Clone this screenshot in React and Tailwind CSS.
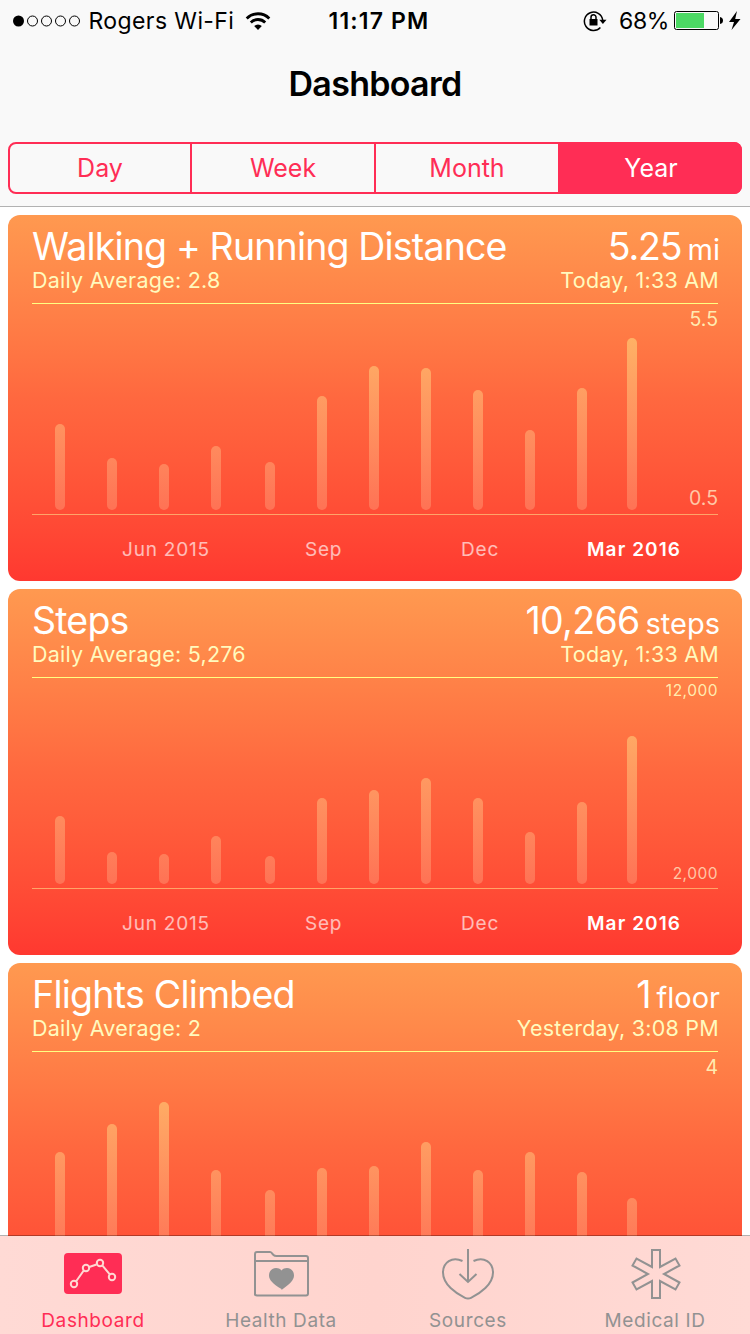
import React from 'react'

const BAR_X = [55, 107, 159, 211, 265, 317, 369, 421, 473, 525, 577, 627]

const SEGMENTS = [
  { label: 'Day', width: 'w-[182px]' },
  { label: 'Week', width: 'w-[184px]' },
  { label: 'Month', width: 'w-[184px]' },
]

const CARDS = [
  {
    id: 'distance',
    title: 'Walking + Running Distance',
    titleClass: 'tracking-[-0.83px]',
    average: '2.8',
    value: '5.25',
    unit: 'mi',
    valueClass: 'tracking-[-1.1px]',
    time: 'Today, 1:33 AM',
    max: '5.5',
    min: '0.5',
    scaleClass: 'text-[19.5px] pt-[3px] pb-[4px]',
    bars: [86, 52, 46, 64, 48, 114, 144, 142, 120, 80, 122, 172],
    showMonths: true,
  },
  {
    id: 'steps',
    title: 'Steps',
    titleClass: 'tracking-[-0.8px]',
    average: '5,276',
    value: '10,266',
    unit: 'steps',
    valueClass: 'tracking-[-0.7px]',
    time: 'Today, 1:33 AM',
    max: '12,000',
    min: '2,000',
    scaleClass: 'text-[15.5px] tracking-[0.5px] pt-[1px] pb-[2px]',
    bars: [68, 32, 30, 48, 28, 86, 94, 106, 86, 52, 82, 148],
    showMonths: true,
  },
  {
    id: 'flights',
    title: 'Flights Climbed',
    titleClass: 'tracking-[-0.74px]',
    average: '2',
    value: '1',
    unit: 'floor',
    valueClass: 'tracking-[-1px]',
    time: 'Yesterday, 3:08 PM',
    max: '4',
    scaleClass: 'text-[19.5px] pt-[3px] pb-[4px]',
    bars: [106, 134, 156, 88, 68, 90, 92, 116, 88, 106, 86, 60],
  },
]

function StatusBar() {
  return (
    <div className="flex h-10 items-center justify-between pl-3 pr-[9px] pt-[1px] text-[23px] text-black">
      <div className="flex w-[300px] items-center">
        <svg width="70" height="14" viewBox="0 0 70 14" fill="none" stroke="black">
          <circle cx="6.5" cy="7" r="5.5" fill="black" stroke="none" />
          <circle cx="20.5" cy="7" r="5" />
          <circle cx="34.5" cy="7" r="5" />
          <circle cx="48.5" cy="7" r="5" />
          <circle cx="62.5" cy="7" r="5" />
        </svg>
        <span className="ml-[6.5px] whitespace-nowrap pt-[1px] tracking-[0.4px]">Rogers Wi-Fi</span>
        <svg className="ml-[11px]" width="26" height="20" viewBox="0 0 26 20" fill="none" stroke="black" strokeWidth="2.8">
          <path d="M1.7 7.4a16 16 0 0 1 22.6 0" />
          <path d="M5.8 11.5a10.2 10.2 0 0 1 14.4 0" />
          <path d="M9.2 15.1a5.4 5.4 0 0 1 7.6 0L13 19z" fill="black" stroke="none" />
        </svg>
      </div>
      <span className="whitespace-nowrap pl-[5px] pt-[1px] font-semibold tracking-[1.15px]">11:17 PM</span>
      <div className="flex w-[300px] items-center justify-end">
        <svg width="24" height="22" viewBox="0 0 24 22" fill="none" stroke="black" strokeWidth="1.5">
          <path d="M17.4 17.5A9.2 9.2 0 1 1 19.7 10" />
          <path d="M16.3 9.8h7.2L19.9 14z" fill="black" stroke="none" />
          <rect x="6.5" y="9" width="8" height="6.5" fill="black" stroke="none" />
          <path d="M8 9.5V7.3a2.5 2.5 0 0 1 5 0v2.2" />
        </svg>
        <span className="ml-3 pt-[1px] tracking-[-0.4px]">68%</span>
        <svg className="ml-[5px]" width="50" height="20" viewBox="0 0 50 20">
          <rect x="0.5" y="0.5" width="44" height="18" rx="2" fill="none" stroke="black" />
          <rect x="2" y="2" width="28" height="15" fill="#4cd964" />
          <path d="M46 6q3 .5 3 3.500t-3 3.500z" fill="black" />
        </svg>
        <svg className="ml-[5px]" width="12" height="20" viewBox="0 0 12 20">
          <path d="M8 0 0 11h5L2.500 19 11.500 8H6.200z" fill="black" />
        </svg>
      </div>
    </div>
  )
}

function Chart({ card }) {
  return (
    <div className="flex h-[212px] justify-between border-y border-t-[#ffff82] border-b-[#ffe08a]/60">
      <svg width="620" height="210" viewBox="32 0 620 210">
        <defs>
          <linearGradient id={`bar-${card.id}`} gradientUnits="userSpaceOnUse" x1="0" y1="30" x2="0" y2="206">
            <stop offset="0" stopColor="#ffe682" stopOpacity="0.52" />
            <stop offset="1" stopColor="#ffcfa4" stopOpacity="0.28" />
          </linearGradient>
        </defs>
        {card.bars.map((height, i) => (
          <rect
            key={BAR_X[i]}
            x={BAR_X[i]}
            y={206 - height}
            width="10"
            height={height}
            rx="5"
            fill={`url(#bar-${card.id})`}
          />
        ))}
      </svg>
      <div className={`flex flex-col items-end justify-between leading-6 ${card.scaleClass}`}>
        <span className="text-[#fffabe]/90">{card.max}</span>
        {card.min && <span className="text-[#fff0cd]/75">{card.min}</span>}
      </div>
    </div>
  )
}

function HealthCard({ card }) {
  return (
    <section className="h-[366px] shrink-0 rounded-xl bg-linear-to-b from-[#ff9950] via-[#ff683f] to-[#ff3830] px-6">
      <div className="-mr-[2px] flex h-[54px] items-end justify-between whitespace-nowrap text-white">
        <h2 className={`text-[37.5px] leading-[44px] ${card.titleClass}`}>{card.title}</h2>
        <p className={`flex items-baseline gap-[6px] text-[37.5px] leading-[44px] ${card.valueClass}`}>
          {card.value}
          <span className="text-[29px] leading-none tracking-[0px]">{card.unit}</span>
        </p>
      </div>
      <div className="-mr-[1px] -mt-[2px] flex h-9 justify-between whitespace-nowrap text-[21.5px] leading-[26px] tracking-[0.25px] text-[#fffabe]">
        <span>Daily Average: {card.average}</span>
        <span>{card.time}</span>
      </div>
      <Chart card={card} />
      {card.showMonths && (
        <div className="flex h-[66px] items-center whitespace-nowrap pl-[90px] pt-[4px] text-[19px] tracking-[0.8px] text-white/65">
          <span className="w-[183px]">Jun 2015</span>
          <span className="w-[156px]">Sep</span>
          <span className="w-[126px]">Dec</span>
          <span className="font-semibold tracking-[1.1px] text-white">Mar 2016</span>
        </div>
      )}
    </section>
  )
}

function DashboardIcon() {
  return (
    <svg className="shrink-0" width="60" height="54" viewBox="0 0 60 54" fill="none">
      <rect x="1" y="6" width="58" height="41" rx="4" fill="#ff2d55" />
      <g stroke="#ffd8d2" strokeWidth="2">
        <path d="M13 34.500 20.800 23.500M25.500 20.200l8-2.700M39.500 18.700l7.300 8.700" />
        <circle cx="11" cy="37" r="3.200" />
        <circle cx="23" cy="21" r="3.200" />
        <circle cx="37" cy="16" r="3.200" />
        <circle cx="49" cy="30" r="3.200" />
      </g>
    </svg>
  )
}

function HealthDataIcon() {
  return (
    <svg className="shrink-0" width="60" height="54" viewBox="0 0 60 54" fill="none" stroke="#929292" strokeWidth="2">
      <path d="M4 48.500V7Q4 5 6 5h13q1.500 0 2.500 2l1 1q1 1 3 1H55q2 0 2 2v35.500q0 2-2 2H6q-2 0-2-2zM4 14h53" />
      <path d="M30.500 42C22 37 18 33 18 28.500c0-7.500 8.500-9.500 12.500-5 4-4.500 12.500-2.500 12.500 5 0 4.500-4 8.500-12.500 14.500z" fill="#929292" stroke="none" />
    </svg>
  )
}

function SourcesIcon() {
  return (
    <svg className="shrink-0" width="60" height="54" viewBox="0 0 60 54" fill="none" stroke="#929292" strokeWidth="2">
      <path d="M24.500 14C14 9 5 15.500 5 25.500c0 12 13 21 22 25.300q3 1.400 6 0C42 46.500 55 37.500 55 25.500 55 15.500 46 9 35.500 14" />
      <path d="M30 2v33M21.500 27l8.500 8 8.500-8" />
    </svg>
  )
}

function MedicalIcon() {
  return (
    <svg className="shrink-0" width="60" height="54" viewBox="-1 0 60 54" fill="none" stroke="#929292" strokeWidth="2">
      <path d="M26 3h8v17L49.500 11.500l4 7L38 27l15.500 8.500-4 7L34 34v17h-8V34l-15.500 8.500-4-7L22 27 6.500 18.500l4-7L26 20z" />
    </svg>
  )
}

const TABS = [
  { label: 'Dashboard', Icon: DashboardIcon, className: 'w-[186px] text-[#ff2d55]' },
  { label: 'Health Data', Icon: HealthDataIcon, className: 'w-[190px] text-[#929292]' },
  { label: 'Sources', Icon: SourcesIcon, className: 'w-[184px] text-[#929292]' },
  { label: 'Medical ID', Icon: MedicalIcon, className: 'w-[190px] text-[#929292]' },
]

export default function App() {
  return (
    <div className="flex h-[1334px] w-[750px] flex-col overflow-hidden bg-white font-['Inter','Liberation_Sans',sans-serif]">
      {/* Navigation header */}
      <header className="h-[207px] shrink-0 border-b border-[#b2b2b2] bg-[#f9f9f9]">
        <StatusBar />
        <h1 className="h-[102px] pt-[22px] text-center text-[34px] font-semibold leading-[44px] tracking-[-0.7px] text-black">
          Dashboard
        </h1>
        <div className="mx-2 flex h-[52px] rounded-lg border-2 border-[#ff2d55] text-[25px] text-[#ff2d55]">
          {SEGMENTS.map((segment) => (
            <button key={segment.label} className={`border-r-2 border-[#ff2d55] pt-[2px] ${segment.width}`}>
              {segment.label}
            </button>
          ))}
          <button className="-my-0.5 -mr-0.5 flex-1 rounded-r-lg bg-[#ff2d55] pt-[2px] text-white">Year</button>
        </div>
      </header>

      {/* Health cards */}
      <main className="flex h-[1029px] shrink-0 flex-col gap-2 overflow-hidden px-2 pt-2">
        {CARDS.map((card) => (
          <HealthCard key={card.id} card={card} />
        ))}
      </main>

      {/* Bottom tabs */}
      <nav className="-mt-px flex h-[99px] shrink-0 border-t border-black/30 bg-linear-to-r from-[#ffdad5] via-[#ffd4ce] to-[#ffdad5] bg-clip-padding">
        {TABS.map(({ label, Icon, className }) => (
          <button key={label} className={`flex flex-col items-center pt-[11px] ${className}`}>
            <Icon />
            <span className="mt-[7px] whitespace-nowrap text-[19px] leading-[26px] tracking-[0.6px]">{label}</span>
          </button>
        ))}
      </nav>
    </div>
  )
}
